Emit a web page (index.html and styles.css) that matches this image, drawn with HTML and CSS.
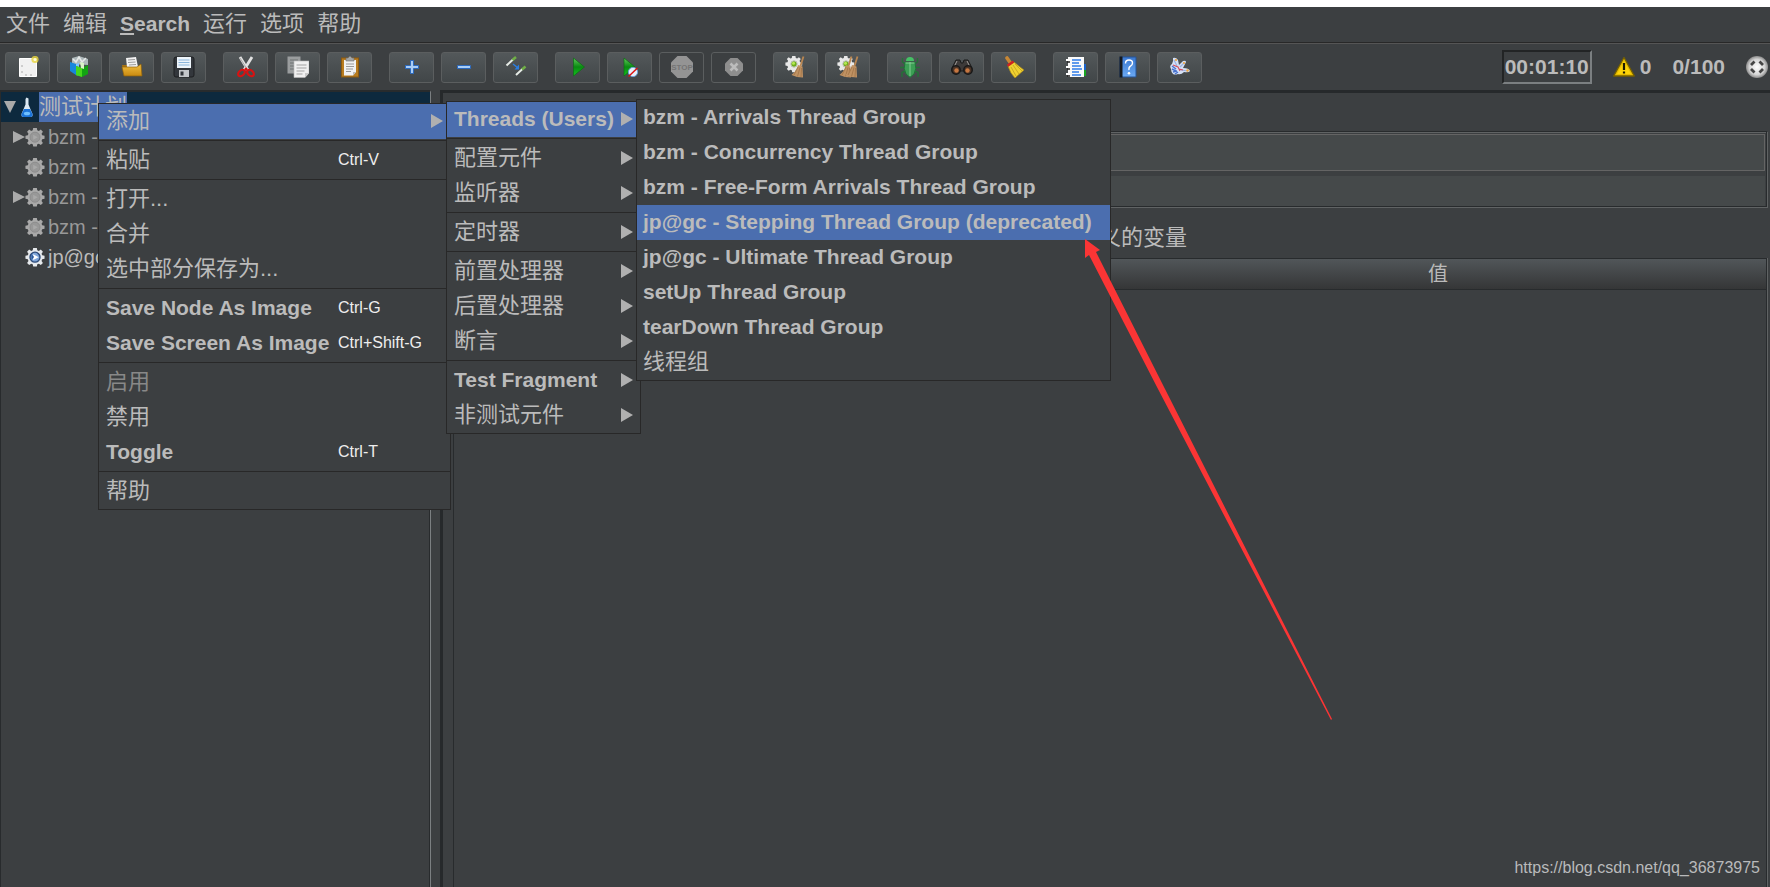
FILE: index.html
```
<!DOCTYPE html>
<html lang="zh-CN">
<head>
<meta charset="utf-8">
<title>JMeter</title>
<link rel="stylesheet" href="styles.css">
</head>
<body>
<svg class="defs" aria-hidden="true">
  <defs>
    <linearGradient id="g-gold" x1="0" y1="0" x2="0" y2="1"><stop offset="0" stop-color="#f3c041"/><stop offset="1" stop-color="#c98a10"/></linearGradient>
    <linearGradient id="g-green" x1="0" y1="0" x2="0" y2="1"><stop offset="0" stop-color="#5fc95a"/><stop offset=".5" stop-color="#0a8a12"/><stop offset="1" stop-color="#12c41e"/></linearGradient>
    <linearGradient id="g-book" x1="0" y1="0" x2="0" y2="1"><stop offset="0" stop-color="#3b78cf"/><stop offset="1" stop-color="#6aa9f3"/></linearGradient>
    <radialGradient id="g-ball"><stop offset="0" stop-color="#fff"/><stop offset=".7" stop-color="#d4d4d4"/><stop offset="1" stop-color="#8c8c8c"/></radialGradient>
    <path id="cog" d="M9 1h4l.5 2.6 1.7.7 2.2-1.5 2.3 2.3-1.5 2.2.7 1.7 2.6.5v3.500l-2.600.6-.7 1.700 1.500 2.200-2.300 2.300-2.200-1.500-1.700.7L13 21.500H9l-.5-2.500-1.700-.7-2.200 1.500-2.300-2.300 1.500-2.200-.7-1.700L.5 13V9.500l2.600-.5.7-1.700-1.500-2.200 2.300-2.300 2.200 1.500 1.700-.7z"/>
    <symbol id="gear-off" viewBox="0 0 22 22"><use href="#cog" fill="#a9a9a9"/><circle cx="11" cy="11.200" r="5.500" fill="#989898" stroke="#8a8a8a"/><path d="M9 8.500l5 2.700-5 2.700z" fill="#a9a9a9"/></symbol>
    <symbol id="gear-on" viewBox="0 0 22 22"><use href="#cog" fill="#e6e9ec"/><circle cx="11" cy="11.200" r="5.500" fill="#7fa5d8" stroke="#2c4a78" stroke-width="1.500"/><path d="M9 8l6 3.200-6 3.200z" fill="#fff"/><path d="M7 7.500v7l3-3.500z" fill="#2c5a9c"/></symbol>
    <symbol id="sweep-gear" viewBox="0 0 22 22"><use href="#cog" fill="#e8e8e8" transform="translate(0 1) scale(.8)"/><circle cx="9" cy="10" r="3.200" fill="#6fae1c" stroke="#c4c4c4"/><circle cx="8.500" cy="9.300" r="1.500" fill="#b6ea52"/></symbol>
    <symbol id="broom" viewBox="0 0 14 22"><path d="M12.500 0.500L9.500 10" stroke="#b98651" stroke-width="1.800"/><path d="M7 9l4.500 1.500.5 11-6-.5-5.500-2q5-4 6.500-10z" fill="#c09263"/><path d="M7 11l-4 8M9 11.500L6.500 20.500M10.500 12l-.500 9" stroke="#94683d" stroke-width=".6"/></symbol>
  </defs>
</svg>

<div class="app">
  <nav class="menubar">
    <button>文件</button><button>编辑</button><button class="latin"><u>S</u>earch</button><button>运行</button><button>选项</button><button>帮助</button>
  </nav>

  <header class="toolbar">
    <div class="group">
      <button class="tool" aria-label="新建"><svg viewBox="0 0 22 22"><path d="M2.500 2.500h17v18h-17z" fill="#f1f1f1" stroke="#fff"/><path d="M5 15v2M5 9v2M8 19h2M13 19h2" stroke="#aaa"/><circle cx="18" cy="3.500" r="3.600" fill="#e9d63e" opacity=".8"/><circle cx="18" cy="3.500" r="1.500" fill="#fffde0"/></svg></button>
      <button class="tool" aria-label="模板"><svg viewBox="0 0 22 22"><path d="M3 2l7-2 9 3 0 6-16-1z" fill="#aeb9bb"/><path d="M4 3l3 3 3-5 3 5 4-4" fill="none" stroke="#e6e9e9" stroke-width="1.500"/><path d="M1 6l6 2v11l-6-4z" fill="#1687dc"/><path d="M7 8l3-1v13l-3-1z" fill="#7fc6ff"/><path d="M7 10l6 2 6-3v9l-6 3-6-2z" fill="#12a312"/><path d="M7 10l6 2v9l-6-2z" fill="#46d61c"/><path d="M11 6l4 1v6l-3-1z" fill="#d9f4c6"/></svg></button>
      <button class="tool" aria-label="打开"><svg viewBox="0 0 22 22"><path d="M1 9h5l2 2h11v9H3z" fill="#a87312"/><path d="M5 2l10-1 2 10H6z" fill="#f3f3f3"/><path d="M7 4l7-.5M7 6.500l7.500-.5M8 9l7-.5" stroke="#9b9b9b"/><path d="M1 11h15l4-3 1 12H3z" fill="url(#g-gold)" stroke="#8f620b" stroke-width=".7"/></svg></button>
      <button class="tool" aria-label="保存"><svg viewBox="0 0 22 22"><rect x="1" y="1" width="20" height="20" rx="2" fill="#33373c" stroke="#1c1e20"/><path d="M4 1h14v11H4z" fill="#eef5fb"/><path d="M5.500 4h11M5.500 6.500h11M5.500 9h11" stroke="#8bb6dd"/><path d="M6 14h10v7H6z" fill="#c4c7ca"/><path d="M7.500 15.500h3v4h-3z" fill="#33373c"/></svg></button>
    </div>
    <div class="group">
      <button class="tool" aria-label="剪切"><svg viewBox="0 0 22 22"><path d="M5 1l8 13M17 1L9 14" stroke="#e2e2e2" stroke-width="2.800"/><path d="M5 2l7 11" stroke="#999" stroke-width=".8"/><ellipse cx="6.500" cy="17" rx="3.800" ry="2.600" transform="rotate(-40 6.500 17)" fill="none" stroke="#d81212" stroke-width="2.200"/><ellipse cx="15.500" cy="17" rx="3.800" ry="2.600" transform="rotate(40 15.500 17)" fill="none" stroke="#d81212" stroke-width="2.200"/><circle cx="11" cy="13" r="1.500" fill="#d81212"/></svg></button>
      <button class="tool" aria-label="复制"><svg viewBox="0 0 22 22"><path d="M.5.5h13v17H.5z" fill="#9a9d9e"/><path d="M3 4h8M3 7h8M3 10h5M3 13h4" stroke="#6f7273"/><path d="M7 5h15v12l-4 4.500H7z" fill="#f0f0f0" stroke="#bbb" stroke-width=".6"/><path d="M9.500 9h10M9.500 12h10M9.500 15h8M9.500 18h6" stroke="#a2a2a2"/><path d="M22 17l-4 4.500V17z" fill="#c9c9c9"/></svg></button>
      <button class="tool" aria-label="粘贴"><svg viewBox="0 0 22 22"><rect x="2.500" y="2" width="17" height="19" fill="#b87b1e" stroke="#8b5a10"/><path d="M5 4h12v12l-3 3.500H5z" fill="#f1f1f1"/><path d="M7 8h8M7 10.500h8M7 13h7M7 15.500h5" stroke="#999"/><path d="M7 2h2l2-2 2 2h2v3H7z" fill="#a4a6a6" stroke="#6e7070" stroke-width=".6"/><path d="M17 16l-3 3.500V16z" fill="#bbb"/></svg></button>
    </div>
    <div class="group">
      <button class="tool" aria-label="展开"><svg viewBox="0 0 22 22"><path d="M9.500 4.500h3v5h5v3h-5v5h-3v-5h-5v-3h5z" fill="#a9cdf6" stroke="#2b69bd"/></svg></button>
      <button class="tool" aria-label="折叠"><svg viewBox="0 0 22 22"><path d="M4.500 9.500h13v3h-13z" fill="#a9cdf6" stroke="#2b69bd"/></svg></button>
      <button class="tool" aria-label="切换"><svg viewBox="0 0 22 22"><path d="M1.500 9.500L8 3.500M11 19l6.500-6" stroke="#e6ebe6" stroke-width="2"/><path d="M7.500 4L11 1M17 13.500l3.500-3" stroke="#6fae46" stroke-width="2.600"/><path d="M8 8l5 4" stroke="#2a7de0" stroke-width="1.500"/><path d="M14 8.500V13.500H9.500z" fill="#2a7de0"/></svg></button>
    </div>
    <div class="group">
      <button class="tool" aria-label="启动"><svg viewBox="0 0 22 22"><path d="M6.500 2l11 9-11 9z" fill="url(#g-green)" stroke="#0b6d12" stroke-width=".7"/></svg></button>
      <button class="tool" aria-label="不停顿启动"><svg viewBox="0 0 22 22"><path d="M5 2l11 9-11 9z" fill="url(#g-green)" stroke="#0b6d12" stroke-width=".7"/><circle cx="14" cy="16" r="4.600" fill="#e6f0fa" stroke="#6fa2d8"/><path d="M9.500 20.500L18.500 12" stroke="#d11" stroke-width="1.500"/></svg></button>
      <button class="tool flat" disabled aria-label="停止"><svg viewBox="0 0 22 22"><path d="M6.500 0h9L22 6.500v9L15.500 22h-9L0 15.500v-9z" fill="#949494"/><text x="11" y="14" class="stop-text">STOP</text></svg></button>
      <button class="tool flat" disabled aria-label="关闭"><svg viewBox="0 0 22 22"><path d="M7.500 2h7L20 7.500v7L14.500 20h-7L2 14.500v-7z" fill="#8e8e8e"/><path d="M7.500 7.500l7 7M14.500 7.500l-7 7" stroke="#bcbcbc" stroke-width="2.600"/></svg></button>
    </div>
    <div class="group">
      <button class="tool" aria-label="清除"><svg viewBox="0 0 22 22"><use href="#sweep-gear" width="22" height="22" y="-2"/><use href="#broom" x="6" width="14" height="22"/></svg></button>
      <button class="tool" aria-label="清除全部"><svg viewBox="0 0 22 22"><use href="#sweep-gear" width="22" height="22" y="-2"/><use href="#broom" x="2" width="14" height="22"/><use href="#broom" x="8" width="14" height="22"/></svg></button>
    </div>
    <div class="group">
      <button class="tool" aria-label="调试"><svg viewBox="0 0 22 22"><path d="M6 8L3.500 6V2M16 8l2.500-2V2M6 11.500H1M16 11.500h5M6 15l-3 1.500V21M16 15l3 1.500V21" fill="none" stroke="#266f38" stroke-width="1.500"/><path d="M7 5q0-4 4-4t4 4z" fill="#45c065"/><path d="M6 6h10q2 7-1 12l-4 3.500L7 18Q4 13 6 6z" fill="#3c9f55" stroke="#22713a"/><path d="M11 6v14M6.500 7h9" stroke="#8ed39c" stroke-width=".9"/></svg></button>
      <button class="tool" aria-label="查找"><svg viewBox="0 0 22 22"><path d="M5 4h4l1 3h2l1-3h4l4 8v3H1v-3z" fill="#3d3a39" stroke="#1b1b1b"/><path d="M6 5L3 11M16 5l3 6" stroke="#9f9c9a"/><circle cx="5" cy="14" r="4.200" fill="#4a3326" stroke="#191919" stroke-width="1.500"/><circle cx="17" cy="14" r="4.200" fill="#4a3326" stroke="#191919" stroke-width="1.500"/><circle cx="5.500" cy="14.500" r="2.200" fill="#c67741"/><circle cx="16.500" cy="14.500" r="2.200" fill="#c67741"/></svg></button>
      <button class="tool" aria-label="重置查找"><svg viewBox="0 0 22 22"><path d="M4 2l3.500 5" stroke="#c78735" stroke-width="3.600" stroke-linecap="round"/><path d="M5 10l6-4q6 5 10 8l-9 8q-5-5-7-12z" fill="#f0d130" stroke="#a8871a" stroke-width=".7"/><path d="M8 11l5 9M10 9l6 9M12 8l7 7" stroke="#b8981f" stroke-width=".7"/><path d="M4.500 9.800L10.500 5.500" stroke="#cf2222" stroke-width="2.600"/></svg></button>
    </div>
    <div class="group">
      <button class="tool" aria-label="函数助手"><svg viewBox="0 0 22 22"><path d="M17 8h4v6h-4z" fill="#1b63c9"/><path d="M17 14h4v6h-4z" fill="#18a322"/><path d="M3 1h16v20H3z" fill="#fafafa"/><path d="M7 4h9M7 7h7M7 10h9M7 13h10M7 16h7M7 19h9" stroke="#2f7ce8" stroke-width="1.300"/><path d="M1 4h4M1 11h4M1 18h4" stroke="#fff" stroke-width="2"/><path d="M2 6h3M2 13h3M2 20h3" stroke="#222" stroke-width="1.300"/></svg></button>
      <button class="tool" aria-label="帮助"><svg viewBox="0 0 22 22"><path d="M3 1h16v20H3z" fill="url(#g-book)" stroke="#265596"/><path d="M2.500.5h3v21h-3z" fill="#16191d"/><path d="M8.500 7.500q0-3.500 3.500-3.500t3.500 3q0 2-2 3.200T12 14" fill="none" stroke="#fff" stroke-width="1.400"/><circle cx="12" cy="17.200" r="1.300" fill="#fff"/></svg></button>
      <button class="tool" aria-label="关于"><svg viewBox="0 0 22 22"><path d="M4 2q3-1 5 2l1 5 4-4q3-1 3 1l-3 6q6 0 7 3-1 2-6 1-3 3-6 2-3 1-5 0-2-2-2-5-2-3 1-5l1-3z" fill="#d5e0f5"/><path d="M3 10l4 3M3 13l4 2M4 16l4-1M6 18l3-2" stroke="#4a74cf" stroke-width="1.500"/><path d="M5 4l3 6M11 11l4-4M12 14l7 1" stroke="#9cb3e3" stroke-width="1.200"/><path d="M4 9l5 2 2 4M10 13l4 1" fill="none" stroke="#d34a5a" stroke-width="1.100"/><circle cx="7" cy="4" r="1.100" fill="#f0a53b"/><circle cx="15" cy="7" r="1.100" fill="#f0a53b"/><circle cx="18.500" cy="14.500" r="1.200" fill="#f0a53b"/></svg></button>
    </div>
    <div class="status">
      <output class="timer">00:01:10</output>
      <span class="errors"><svg viewBox="0 0 22 22"><path d="M11 1.500L21.300 20H.7z" fill="#e8bd00" stroke="#756000" stroke-width="1.300" stroke-linejoin="round"/><path d="M11 5l7 13H4z" fill="#fdd408"/><path d="M11 7v7M11 15.500v2" stroke="#1d1a00" stroke-width="2.200"/></svg>0</span>
      <span class="threads">0/100</span>
      <svg viewBox="0 0 22 22"><circle cx="11" cy="11" r="11" fill="url(#g-ball)"/><path d="M5 9l3.500-3.500M13.500 5.500L17 9M17 13l-3.500 3.500M8.500 16.500L5 13" stroke="#454545" stroke-width="2.800"/></svg>
    </div>
  </header>

  <main class="workspace">
    <aside class="tree">
      <ul>
        <li class="node root"><svg class="twisty" viewBox="0 0 12 12"><path d="M0 0h12L6 12z"/></svg><svg class="flask" viewBox="0 0 12 20"><path d="M4.500 2l1-1.500 2 1v6L11.500 17q.5 3-2 3h-7q-2.500 0-2-3l4-9.500z" fill="#dce8f2"/><path d="M3 12h6l2.500 5q.5 3-2 3h-7q-2.500 0-2-3z" fill="#1b73d8"/><ellipse cx="6" cy="16.500" rx="3.200" ry="1.800" fill="#6fc0ff"/></svg><span class="name">测试计划</span></li>
        <li class="node off"><svg class="twisty" viewBox="0 0 12 12"><path d="M0 0l12 6-12 6z"/></svg><svg class="gear"><use href="#gear-off"/></svg>bzm -</li>
        <li class="node off leaf"><svg class="gear"><use href="#gear-off"/></svg>bzm -</li>
        <li class="node off"><svg class="twisty" viewBox="0 0 12 12"><path d="M0 0l12 6-12 6z"/></svg><svg class="gear"><use href="#gear-off"/></svg>bzm -</li>
        <li class="node off leaf"><svg class="gear"><use href="#gear-off"/></svg>bzm -</li>
        <li class="node leaf"><svg class="gear"><use href="#gear-on"/></svg>jp@gc</li>
      </ul>
    </aside>
    <div class="splitter"></div>
    <section class="detail">
      <div class="fields">
        <input class="name-field" type="text" aria-label="名称">
        <input class="note-field" type="text" aria-label="注释">
      </div>
      <h2>用户定义的变量</h2>
      <div class="table-box">
        <table><thead><tr><th></th><th>值</th></tr></thead></table>
      </div>
    </section>
  </main>
</div>

<ul class="menu menu-edit">
  <li><button class="active">添加<svg class="more" viewBox="0 0 12 14"><path d="M0 0l12 7-12 7z"/></svg></button></li>
  <li class="sep"></li>
  <li><button><span class="label">粘贴</span><kbd>Ctrl-V</kbd></button></li>
  <li class="sep"></li>
  <li><button>打开...</button></li>
  <li><button>合并</button></li>
  <li><button>选中部分保存为...</button></li>
  <li class="sep"></li>
  <li><button class="latin"><span class="label">Save Node As Image</span><kbd>Ctrl-G</kbd></button></li>
  <li><button class="latin"><span class="label">Save Screen As Image</span><kbd>Ctrl+Shift-G</kbd></button></li>
  <li class="sep"></li>
  <li><button disabled>启用</button></li>
  <li><button>禁用</button></li>
  <li><button class="latin"><span class="label">Toggle</span><kbd>Ctrl-T</kbd></button></li>
  <li class="sep"></li>
  <li><button>帮助</button></li>
</ul>

<ul class="menu menu-add">
  <li><button class="active latin">Threads (Users)<svg class="more" viewBox="0 0 12 14"><path d="M0 0l12 7-12 7z"/></svg></button></li>
  <li class="sep"></li>
  <li><button>配置元件<svg class="more" viewBox="0 0 12 14"><path d="M0 0l12 7-12 7z"/></svg></button></li>
  <li><button>监听器<svg class="more" viewBox="0 0 12 14"><path d="M0 0l12 7-12 7z"/></svg></button></li>
  <li class="sep"></li>
  <li><button>定时器<svg class="more" viewBox="0 0 12 14"><path d="M0 0l12 7-12 7z"/></svg></button></li>
  <li class="sep"></li>
  <li><button>前置处理器<svg class="more" viewBox="0 0 12 14"><path d="M0 0l12 7-12 7z"/></svg></button></li>
  <li><button>后置处理器<svg class="more" viewBox="0 0 12 14"><path d="M0 0l12 7-12 7z"/></svg></button></li>
  <li><button>断言<svg class="more" viewBox="0 0 12 14"><path d="M0 0l12 7-12 7z"/></svg></button></li>
  <li class="sep"></li>
  <li><button class="latin">Test Fragment<svg class="more" viewBox="0 0 12 14"><path d="M0 0l12 7-12 7z"/></svg></button></li>
  <li><button>非测试元件<svg class="more" viewBox="0 0 12 14"><path d="M0 0l12 7-12 7z"/></svg></button></li>
</ul>

<ul class="menu menu-threads">
  <li><button class="latin">bzm - Arrivals Thread Group</button></li>
  <li><button class="latin">bzm - Concurrency Thread Group</button></li>
  <li><button class="latin">bzm - Free-Form Arrivals Thread Group</button></li>
  <li><button class="latin active">jp@gc - Stepping Thread Group (deprecated)</button></li>
  <li><button class="latin">jp@gc - Ultimate Thread Group</button></li>
  <li><button class="latin">setUp Thread Group</button></li>
  <li><button class="latin">tearDown Thread Group</button></li>
  <li><button>线程组</button></li>
</ul>

<svg class="pointer" viewBox="0 0 248 482" aria-hidden="true"><path d="M0 0l15 11-4 2 69 137 167 330-1 1L73 150 4 16 0 19z" fill="#fb3535"/></svg>
<a class="watermark" href="https://blog.csdn.net/qq_36873975">https://blog.csdn.net/qq_36873975</a>
</body>
</html>
```
FILE: styles.css
```
* { box-sizing: border-box; }

body {
  position: relative;
  display: flex;
  flex-direction: column;
  min-height: 100vh;
  margin: 0;
  padding-top: 7px;
  overflow: hidden;
  background: #fff;
  color: #bbb;
  font: 22px/30px "Liberation Sans", "Noto Sans CJK SC", sans-serif;
}

button {
  margin: 0;
  padding: 0;
  border: 0;
  background: none;
  color: inherit;
  font: inherit;
  text-align: left;
  white-space: nowrap;
}

ul { margin: 0; padding: 0; list-style: none; }
svg { flex: none; width: 22px; height: 22px; }
.defs { position: absolute; width: 0; height: 0; }
.latin { font-size: 21px; font-weight: 700; }

.app {
  flex: 1;
  display: flex;
  flex-direction: column;
  background: #3c3f41;
}

.menubar {
  display: flex;
  align-items: center;
  gap: 13px;
  height: 37px;
  padding: 0 6px 2px;
  border-bottom: 1px solid #555;
  box-shadow: inset 0 -1px #282828;
}

.toolbar {
  display: flex;
  align-items: center;
  gap: 17px;
  height: 46px;
  padding-left: 5px;
}

.group { display: flex; gap: 7px; }

.tool {
  display: flex;
  align-items: center;
  justify-content: center;
  width: 45px;
  height: 31px;
  border: 1px solid #5b5e5f;
  border-radius: 3px;
  background: linear-gradient(#53585a, #414648);
}
.tool.flat { background: #3c3f41; }
.stop-text { fill: #747474; font: 700 8px "Liberation Sans", sans-serif; text-anchor: middle; }

.status {
  display: flex;
  align-items: center;
  margin-left: auto;
  padding-right: 2px;
  gap: 21px;
  font-size: 21px;
  font-weight: 700;
}
.timer {
  height: 34px;
  padding: 0 1px;
  border: 2px solid;
  border-color: #222425 #7b7f81 #7b7f81 #222425;
}
.errors { display: flex; align-items: center; gap: 5px; }

.workspace {
  flex: 1;
  display: grid;
  grid-template-columns: 431px 9px 1fr;
}

.tree {
  border-top: 2px solid #282b2d;
  border-left: 1px solid #282b2d;
  border-right: 1px solid #7b7f81;
  box-shadow: inset -1px 0 #282b2d;
  font-size: 20px;
}
.node { display: flex; align-items: center; height: 30px; padding-left: 12px; }
.node.leaf { padding-left: 24px; }
.node.off { color: #999; }
.node.root { padding-left: 3px; background: #0d293e; font-size: 22px; }
.twisty { width: 12px; height: 12px; fill: #aaa; }
.flask { width: 12px; height: 20px; margin: 0 6px 0 5px; }
.gear { width: 20px; height: 20px; margin-right: 3px; }
.root .name { background: #4b6eaf; }

.detail {
  display: flex;
  flex-direction: column;
  padding: 38px 3px 0 10px;
  border-top: 3px solid #26292b;
  border-left: 3px solid #26292b;
}
.fields {
  display: flex;
  flex-direction: column;
  gap: 5px;
  padding: 2px 1px 0;
  border: 1px solid #282b2d;
  box-shadow: 1px 1px #606364, inset 0 1px #606364;
}
.fields input {
  width: 100%;
  padding: 0 6px;
  border: 0;
  background: #45494a;
  color: #bbb;
  font: inherit;
}
.fields .name-field { height: 37px; border: 1px solid #646464; }
.fields .note-field { height: 30px; }

.detail h2 {
  margin: 0;
  padding-top: 11px;
  font-size: 22px;
  font-weight: 400;
  line-height: 40px;
  text-align: center;
}
.table-box {
  flex: 1;
  border: 1px solid #282b2d;
  border-bottom: 0;
  box-shadow: 1px 0 #606364;
}
table { width: 100%; border-collapse: collapse; table-layout: fixed; }
th {
  height: 30px;
  padding: 0;
  border-bottom: 1px solid #282b2d;
  background: linear-gradient(#515659, #353637);
  font-size: 20px;
  font-weight: 400;
  line-height: 28px;
}

.menu {
  position: absolute;
  border: 1px solid #282828;
  background: #3c3f41;
}
.menu-edit { left: 98px; top: 103px; width: 353px; }
.menu-add { left: 446px; top: 101px; width: 195px; }
.menu-threads { left: 636px; top: 99px; width: 475px; }
.menu button {
  display: flex;
  align-items: center;
  width: 100%;
  height: 35px;
  padding: 0 7px 2px;
}
.menu-threads button { padding-left: 6px; }
.menu button:disabled { color: #888; }
.menu .active { background: #4b6eaf; }
.menu .label { width: 232px; }
.menu kbd { color: #eee; font: 16px "Liberation Sans", sans-serif; }
.more { width: 12px; height: 14px; margin-left: auto; fill: #b0b0b0; }
.sep { height: 4px; padding-top: 1px; }
.sep::before { content: ""; display: block; height: 1px; background: #282828; }

.pointer { position: absolute; left: 1085px; top: 239px; width: 248px; height: 482px; }
.watermark {
  position: absolute;
  right: 10px;
  bottom: 4px;
  color: #b9babb;
  font-size: 16px;
  text-decoration: none;
}
```
